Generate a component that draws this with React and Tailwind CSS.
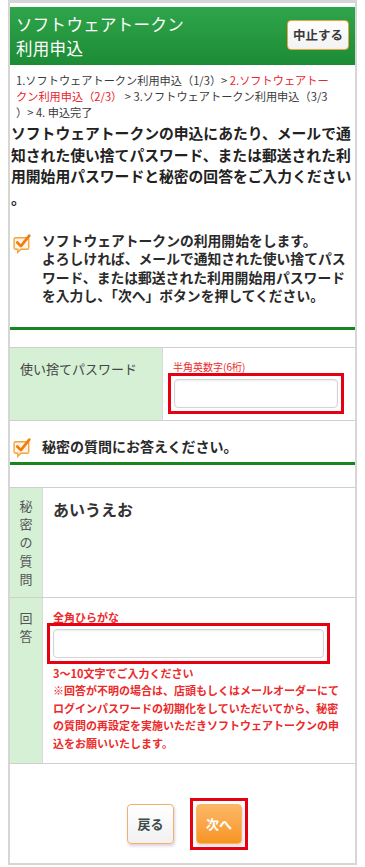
import React from 'react';

const CheckIcon = () => (
  <svg width="20" height="22" viewBox="0 0 19 21" className="shrink-0">
    <path d="M2.5 5.5 h11 a1.5 1.5 0 0 1 1.5 1.5 v8 a1.5 1.5 0 0 1 -1.5 1.5 h-6 l-3 3 v-3 h-2 a1.5 1.5 0 0 1 -1.5 -1.5 v-8 a1.5 1.5 0 0 1 1.5 -1.5 z" fill="#fff4e3" stroke="#f3a33b" strokeWidth="1.3" />
    <path d="M4 10 l3.5 3.5 l8 -10" fill="none" stroke="#ef7d12" strokeWidth="2.6" strokeLinecap="round" strokeLinejoin="round" />
  </svg>
);

export default function App() {
  return (
    <div className="w-[365px] h-[867px] bg-white font-['Noto_Sans_CJK_JP',sans-serif] text-[#333] overflow-hidden">
      <div className="ml-[8px] w-[349px] border-x-2 border-t-[3px] border-b-2 border-[#d6d6d6] pt-[4px]">
        {/* header */}
        <div className="h-[58px] bg-gradient-to-b from-[#2fa54b] to-[#1c8b35] flex items-center justify-between pl-[6px] pr-[6px]">
          <h1 className="text-white text-[16.5px] leading-[24px] tracking-[0.3px]">ソフトウェアトークン<br />利用申込</h1>
          <button className="w-[62px] h-[30px] rounded-[4px] border-[1.5px] border-[#f0a33c] bg-gradient-to-b from-white to-[#f2f2f2] text-[12.5px] font-bold text-[#3a3a3a] mb-[2px]">中止する</button>
        </div>

        {/* breadcrumb */}
        <div className="pl-[6px] pt-[7px] text-[11.2px] leading-[16px] text-[#3a3a3a]">
          <div className="whitespace-nowrap">1.ソフトウェアトークン利用申込（1/3）&gt; <span className="text-[#e8242c]">2.ソフトウェアトー</span></div>
          <div className="whitespace-nowrap"><span className="text-[#e8242c]">クン利用申込（2/3）</span> &gt; 3.ソフトウェアトークン利用申込（3/3</div>
          <div className="whitespace-nowrap">）&gt; 4. 申込完了</div>
        </div>

        {/* lead text */}
        <p className="pl-[1px] pt-[2px] text-[14.8px] leading-[21.7px] font-bold text-[#222] [line-break:anywhere]">
          ソフトウェアトークンの申込にあたり、メールで通知された使い捨てパスワード、または郵送された利用開始用パスワードと秘密の回答をご入力ください。
        </p>

        {/* notice */}
        <div className="flex gap-[9px] pl-[3px] pt-[22px] pr-[8px]">
          <div className="pt-[1px]"><CheckIcon /></div>
          <p className="text-[13.8px] leading-[18.5px] font-semibold text-[#2a2a2a] [line-break:anywhere]">
            ソフトウェアトークンの利用開始をします。<br />
            よろしければ、メールで通知された使い捨てパスワード、または郵送された利用開始用パスワードを入力し、「次へ」ボタンを押してください。
          </p>
        </div>
        <div className="mt-[22px] h-[3px] bg-[#17861f]" />

        {/* one-time password */}
        <div className="mt-[17px] flex border-y border-[#cfcfcf]">
          <div className="w-[153px] bg-[#d5f0d5] pl-[10px] pt-[11px] text-[13px] text-[#444] border-r border-[#d8d8d8]">使い捨てパスワード</div>
          <div className="flex-1 pl-[10px] pt-[13px] pb-[6px]">
            <div className="text-[10px] leading-[12px] text-[#ec2a2a]">半角英数字(6桁)</div>
            <div className="ml-[-5px] w-[176px] border-[3px] border-[#e60012] p-[3px]">
              <div className="h-[29px] rounded-[4px] border border-[#d4d4d4] bg-white shadow-[inset_0_1px_2px_rgba(0,0,0,0.08)]" />
            </div>
          </div>
        </div>

        {/* secret question heading */}
        <div className="flex items-center gap-[9px] pl-[3px] pt-[15px] pr-[8px]">
          <CheckIcon />
          <p className="text-[14px] font-bold text-[#2a2a2a]">秘密の質問にお答えください。</p>
        </div>
        <div className="mt-[4px] h-[3px] bg-[#17861f]" />

        {/* question table */}
        <div className="mt-[22px] border-y border-[#cfcfcf]">
          <div className="flex h-[110px] border-b border-[#cfcfcf]">
            <div className="w-[33px] bg-[#d5f0d5] border-r border-[#d8d8d8] flex flex-col items-center pt-[9px] text-[13px] leading-[18.3px] text-[#555]">
              <span>秘</span><span>密</span><span>の</span><span>質</span><span>問</span>
            </div>
            <div className="flex-1 pl-[10px] pt-[9px] text-[16px] font-semibold text-[#333]">あいうえお</div>
          </div>
          <div className="flex h-[165px]">
            <div className="w-[33px] bg-[#d5f0d5] border-r border-[#d8d8d8] flex flex-col items-center pt-[11px] text-[13px] leading-[18.3px] text-[#555]">
              <span>回</span><span>答</span>
            </div>
            <div className="flex-1 pl-[10px] pt-[13px]">
              <div className="text-[11px] leading-[12px] font-bold text-[#ec2a2a]">全角ひらがな</div>
              <div className="ml-[-6px] w-[283px] border-[3px] border-[#e60012] p-[3px]">
                <div className="h-[29px] rounded-[4px] border border-[#d4d4d4] bg-white shadow-[inset_0_1px_2px_rgba(0,0,0,0.08)]" />
              </div>
              <div className="mt-[1px] w-[290px] text-[11px] leading-[17.5px] font-bold text-[#ec2a2a] [line-break:anywhere]">
                <div>3〜10文字でご入力ください</div>
                <div>※回答が不明の場合は、店頭もしくはメールオーダーにてログインパスワードの初期化をしていただいてから、秘密の質問の再設定を実施いただきソフトウェアトークンの申込をお願いいたします。</div>
              </div>
            </div>
          </div>
        </div>

        {/* buttons */}
        <div className="flex justify-center items-center gap-[16px] pl-[10px] pt-[34px] pb-[13px]">
          <button className="w-[47px] h-[40px] rounded-[4px] border-[1.5px] border-[#f2b06a] bg-gradient-to-b from-white to-[#f1f1f1] text-[13px] font-bold text-[#3d4a4a] shadow-[1px_2px_3px_rgba(160,120,150,0.35)]">戻る</button>
          <div className="border-[3px] border-[#e60012] p-[3px]">
            <button className="w-[46px] h-[40px] rounded-[4px] border border-[#f7b66a] bg-gradient-to-b from-[#fcb865] to-[#f7941d] text-[13px] font-bold text-white shadow-[1px_2px_3px_rgba(160,120,150,0.3)]">次へ</button>
          </div>
        </div>
      </div>
    </div>
  );
}
